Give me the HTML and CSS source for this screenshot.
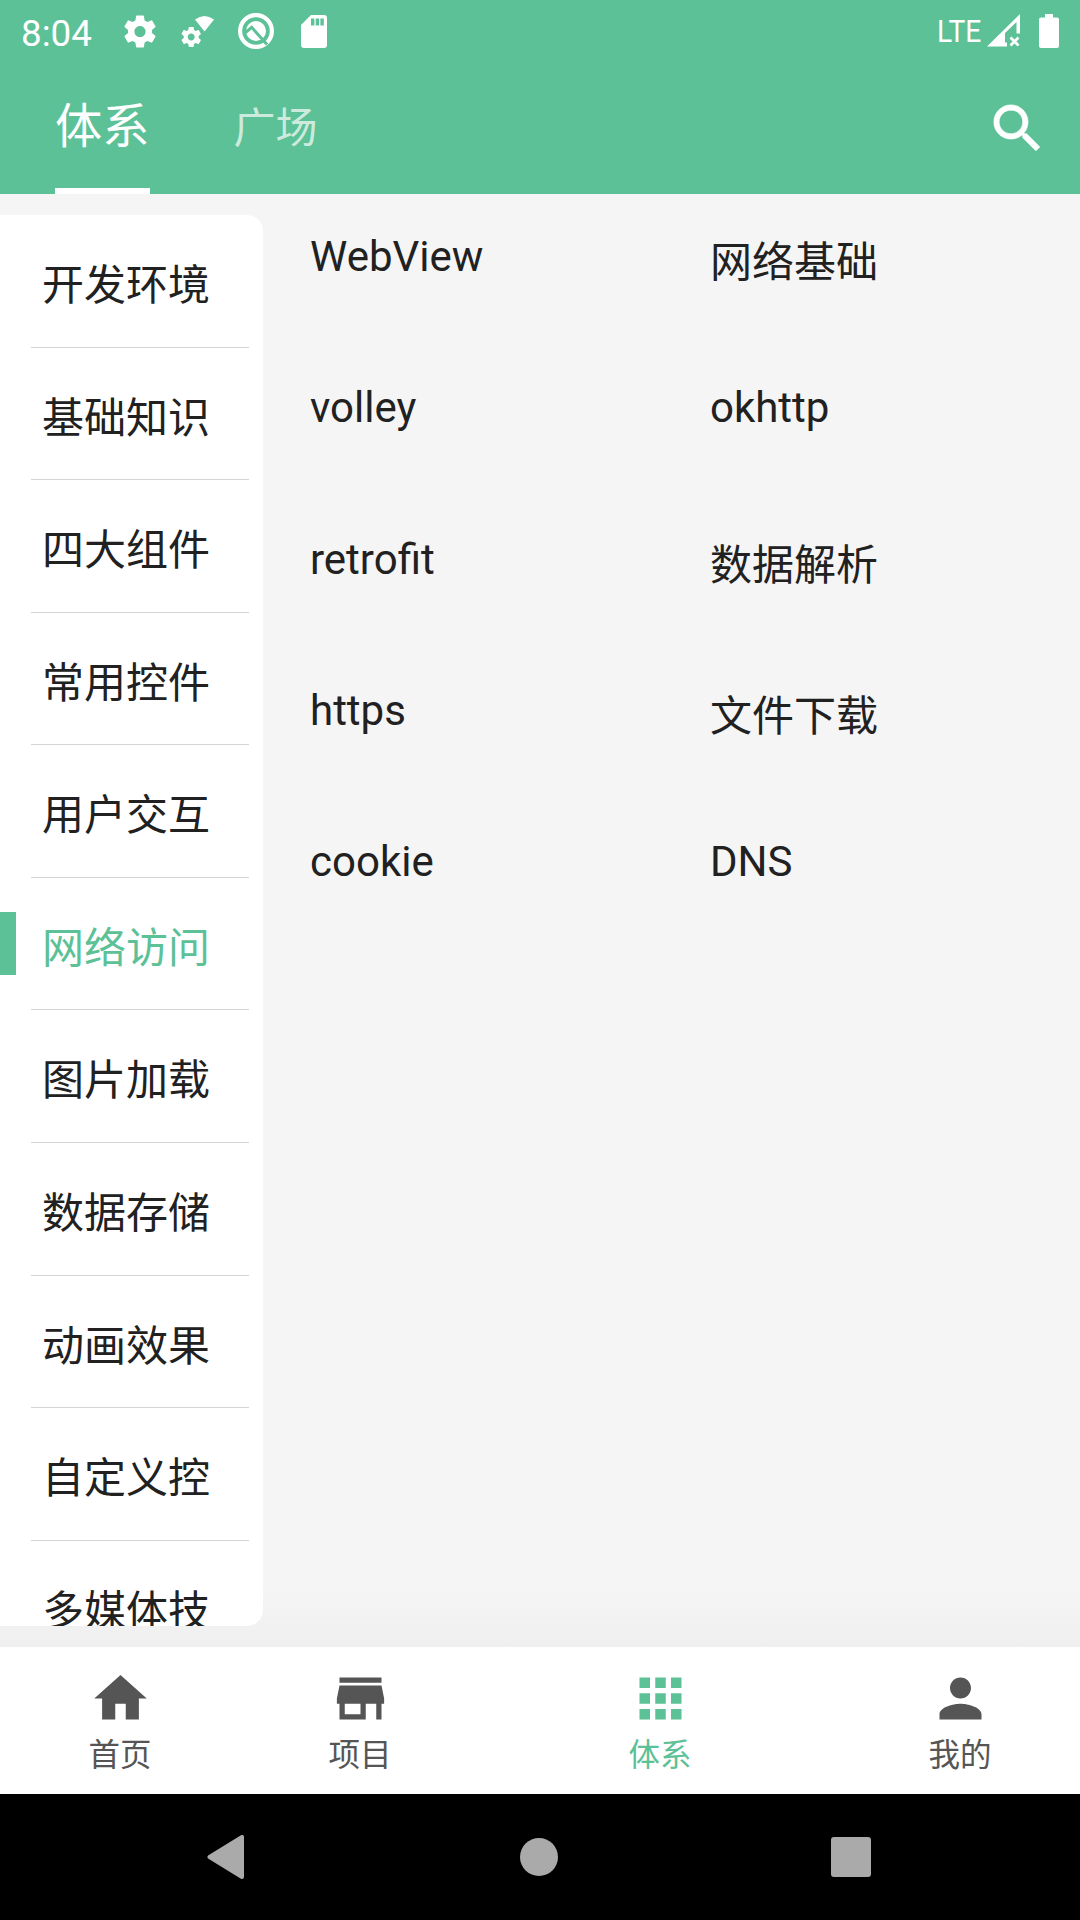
FILE: index.html
```html
<!DOCTYPE html>
<html lang="zh-CN">
<head>
<meta charset="utf-8">
<title>体系</title>
<link rel="stylesheet" href="styles.css">
</head>
<body>
<div class="screen">
  <header class="header">
    <div class="status">
      <span class="clock">8:04</span>
      <svg class="st-gear" viewBox="2 2 20 20"><path fill="#fff" d="M19.43 12.98c.04-.32.07-.64.07-.98s-.03-.66-.07-.98l2.11-1.65c.19-.15.24-.42.12-.64l-2-3.46c-.12-.22-.39-.3-.61-.22l-2.49 1c-.52-.4-1.08-.73-1.69-.98l-.38-2.65C14.46 2.18 14.25 2 14 2h-4c-.25 0-.46.18-.49.42l-.38 2.65c-.61.25-1.17.59-1.69.98l-2.49-1c-.23-.09-.49 0-.61.22l-2 3.46c-.13.22-.07.49.12.64l2.11 1.65c-.04.32-.07.65-.07.98s.03.66.07.98l-2.11 1.65c-.19.15-.24.42-.12.64l2 3.46c.12.22.39.3.61.22l2.49-1c.52.4 1.08.73 1.69.98l.38 2.65c.03.24.24.42.49.42h4c.25 0 .46-.18.49-.42l.38-2.65c.61-.25 1.17-.59 1.69-.98l2.49 1c.23.09.49 0 .61-.22l2-3.46c.12-.22.07-.49-.12-.64l-2.11-1.65zM12 15.5c-1.93 0-3.5-1.57-3.5-3.5s1.57-3.5 3.5-3.5 3.5 1.57 3.5 3.5-1.57 3.5-3.5 3.5z"/></svg>
      <svg class="st-wifi" viewBox="0 0 34 32"><path fill="#fff" d="M14 4.500Q23.500-2.500 33 4.500L23.500 16.500Z"/><g transform="translate(-1.800 10) scale(1)"><path fill="#fff" d="M19.430 12.980c.04-.32.07-.64.07-.98s-.03-.66-.07-.98l2.110-1.650c.19-.15.24-.42.12-.64l-2-3.460c-.12-.22-.39-.3-.61-.22l-2.490 1c-.52-.4-1.080-.73-1.690-.98l-.38-2.650C14.460 2.180 14.250 2 14 2h-4c-.25 0-.46.18-.49.42l-.38 2.650c-.61.25-1.170.59-1.690.98l-2.490-1c-.23-.09-.49 0-.61.22l-2 3.460c-.13.22-.07.49.12.64l2.110 1.650c-.04.32-.07.65-.07.98s.03.66.07.98l-2.110 1.650c-.19.15-.24.42-.12.64l2 3.460c.12.22.39.3.61.22l2.490-1c.52.4 1.080.73 1.690.98l.38 2.650c.03.24.24.42.49.42h4c.25 0 .46-.18.49-.42l.38-2.650c.61-.25 1.170-.59 1.690-.98l2.490 1c.23.09.49 0 .61-.22l2-3.460c.12-.22.07-.49-.12-.64l-2.110-1.650zM12 15.500c-1.930 0-3.500-1.570-3.500-3.500s1.570-3.500 3.500-3.500 3.500 1.570 3.500 3.500-1.570 3.500-3.500 3.500z"/></g></svg>
      <svg class="st-q" viewBox="0 0 36 36"><circle cx="18" cy="18" r="15.900" fill="none" stroke="#fff" stroke-width="4.200"/><circle cx="18" cy="18" r="10" fill="#fff"/><path d="M7.500 19.500l6.200-5.200L29 31.500" fill="none" stroke="#5cc196" stroke-width="3"/></svg>
      <svg class="st-sd" viewBox="0 0 26 33"><path fill="#fff" d="M10 0h13a3 3 0 0 1 3 3v27a3 3 0 0 1-3 3H3a3 3 0 0 1-3-3V10Z"/><path fill="#5cc196" d="M10 3.500h3.400v7H10zM14.700 3.500h3.400v7h-3.400zM19.400 3.500h3.400v7h-3.400z"/></svg>
      <span class="lte">LTE</span>
      <svg class="st-signal" viewBox="0 0 33 33"><path fill="#fff" fill-rule="evenodd" d="M33 0v19.500h-3.500V8L18 19v9.500h2V32.500H0Z"/><path d="M23.500 23.500l8 8M31.500 23.500l-8 8" stroke="#fff" stroke-width="2.700"/></svg>
      <svg class="st-batt" viewBox="0 0 20 34"><path fill="#fff" d="M6 0h8v3.500h4a2 2 0 0 1 2 2V32a2 2 0 0 1-2 2H2a2 2 0 0 1-2-2V5.500a2 2 0 0 1 2-2h4Z"/></svg>
    </div>
    <div class="toolbar">
      <div class="tab tab-active">体系</div>
      <div class="tab">广场</div>
      <svg class="search" viewBox="0 0 24 24"><path fill="#fff" stroke="#fff" stroke-width=".25" d="M15.500 14h-.79l-.28-.27C15.410 12.590 16 11.110 16 9.500 16 5.910 13.090 3 9.500 3S3 5.910 3 9.500 5.910 16 9.500 16c1.610 0 3.090-.59 4.230-1.570l.27.28v.79l5 4.990L20.490 19l-4.990-5zm-6 0C7.010 14 5 11.990 5 9.500S7.010 5 9.500 5 14 7.010 14 9.500 11.990 14 9.500 14z"/></svg>
    </div>
  </header>
  <main class="content">
    <nav class="side">
      <div class="side-item">开发环境</div>
      <div class="side-item">基础知识</div>
      <div class="side-item">四大组件</div>
      <div class="side-item">常用控件</div>
      <div class="side-item">用户交互</div>
      <div class="side-item selected">网络访问</div>
      <div class="side-item">图片加载</div>
      <div class="side-item">数据存储</div>
      <div class="side-item">动画效果</div>
      <div class="side-item">自定义控</div>
      <div class="side-item">多媒体技</div>
    </nav>
    <section class="topics">
      <div class="topic">WebView</div><div class="topic cjk">网络基础</div>
      <div class="topic">volley</div><div class="topic">okhttp</div>
      <div class="topic">retrofit</div><div class="topic cjk">数据解析</div>
      <div class="topic">https</div><div class="topic cjk">文件下载</div>
      <div class="topic">cookie</div><div class="topic">DNS</div>
    </section>
  </main>
  <nav class="bottom">
    <div class="dest"><svg viewBox="0 0 24 24"><path d="M10 20v-6h4v6h5v-8h3L12 3 2 12h3v8z"/></svg><span>首页</span></div>
    <div class="dest"><svg viewBox="0 0 24 24"><path d="M20 4H4v2h16V4zm1 10v-2l-1-5H4l-1 5v2h1v6h10v-6h4v6h2v-6h1zm-9 4H6v-4h6v4z"/></svg><span>项目</span></div>
    <div class="dest current"><svg viewBox="0 0 24 24"><path d="M4 8h4V4H4v4zm6 12h4v-4h-4v4zm-6 0h4v-4H4v4zm0-6h4v-4H4v4zm6 0h4v-4h-4v4zm6-10v4h4V4h-4zm-6 4h4V4h-4v4zm6 6h4v-4h-4v4zm0 6h4v-4h-4v4z"/></svg><span>体系</span></div>
    <div class="dest"><svg viewBox="0 0 24 24"><path d="M12 12c2.210 0 4-1.790 4-4s-1.790-4-4-4-4 1.790-4 4 1.790 4 4 4zm0 2c-2.670 0-8 1.340-8 4v2h16v-2c0-2.660-5.330-4-8-4z"/></svg><span>我的</span></div>
  </nav>
  <div class="system">
    <svg class="back" viewBox="0 0 37 44"><path d="M34.500 2v40L2 22Z" fill="#aaa" stroke="#aaa" stroke-width="4" stroke-linejoin="round"/></svg>
    <div class="home"></div>
    <div class="recent"></div>
  </div>
</div>
</body>
</html>
```
FILE: styles.css
```css
* { box-sizing: border-box; }
body { margin: 0; }
svg { display: block; flex: none; }
.screen {
  width: 1080px;
  height: 1920px;
  display: flex;
  flex-direction: column;
  overflow: hidden;
  background: #f5f5f5;
  color: #212121;
  font-family: Roboto, "Noto Sans CJK SC", sans-serif;
}
.header { height: 194px; flex: none; background: #5cc196; color: #fff; }
.status { height: 63px; display: flex; align-items: flex-start; padding: 0 21px; }
.clock { width: 72px; margin-right: 31px; font-size: 36.75px; line-height: 43px; padding-top: 12px; }
.st-gear { width: 32px; height: 33px; margin: 15px 25px 0 0; }
.st-wifi { width: 34px; height: 32px; margin: 15px 23px 0 0; }
.st-q { width: 36px; height: 36px; margin: 13px 27px 0 0; }
.st-sd { width: 26px; height: 33px; margin-top: 15px; }
.lte {
  margin-left: auto;
  width: 44px;
  margin-right: 6px;
  padding-top: 12px;
  font-size: 32px;
  line-height: 38px;
  transform: scaleX(.88);
  transform-origin: left;
}
.st-signal { width: 33px; height: 33px; margin: 14px 19px 0 0; }
.st-batt { width: 20px; height: 34px; margin: 14px 0 0; }
.toolbar { height: 131px; display: flex; padding: 0 31px 0 55px; }
.tab { height: 131px; font-size: 42px; line-height: 131px; color: rgba(255,255,255,.7); }
.tab-active { width: 94.5px; margin-right: 84px; font-size: 47.25px; line-height: 129px; color: #fff; border-bottom: 6px solid #fff; }
.search { width: 63px; height: 63px; margin: 34px 0 0 auto; }
.content {
  flex: 1;
  min-height: 0;
  display: flex;
  padding: 21px 0;
  background: linear-gradient(#f5f5f5, #efefef) bottom / 100% 60px no-repeat;
}
.side { width: 262.5px; flex: none; overflow: hidden; border-radius: 0 16px 16px 0; background: #fff; }
.side-item {
  height: 132.57px;
  padding: 40px 0 0 11px;
  margin: 0 13.5px 0 31px;
  border-bottom: 1px solid #d5d5d5;
  font-size: 42px;
  line-height: 62px;
  white-space: nowrap;
}
.selected { position: relative; color: #5cc196; }
.selected::before { content: ""; position: absolute; left: -31px; top: 34px; width: 16px; height: 63px; background: #5cc196; }
.topics { display: grid; grid-template-columns: 400px 1fr; grid-auto-rows: 151.3px; margin-left: 47.5px; flex: 1; align-content: start; }
.topic { font-size: 42px; line-height: 50px; padding-top: 17px; }
.cjk { line-height: 61px; }
.bottom { height: 147px; flex: none; display: grid; grid-template-columns: 2fr 2fr 3fr 2fr; background: #fff; color: #555; fill: #555; }
.dest { display: flex; flex-direction: column; align-items: center; padding-top: 20px; }
.dest svg { width: 63px; height: 63px; }
.dest span { font-size: 31.5px; line-height: 46px; padding-top: 3px; }
.current { color: #5cc196; fill: #5cc196; }
.system { height: 126px; flex: none; display: flex; align-items: center; justify-content: space-between; padding: 0 209px 0 207px; background: #000; }
.back { width: 38px; height: 44px; }
.home { width: 38px; height: 38px; margin-left: 2px; border-radius: 50%; background: #aaa; }
.recent { width: 40px; height: 40px; border-radius: 3px; background: #aaa; }
```
